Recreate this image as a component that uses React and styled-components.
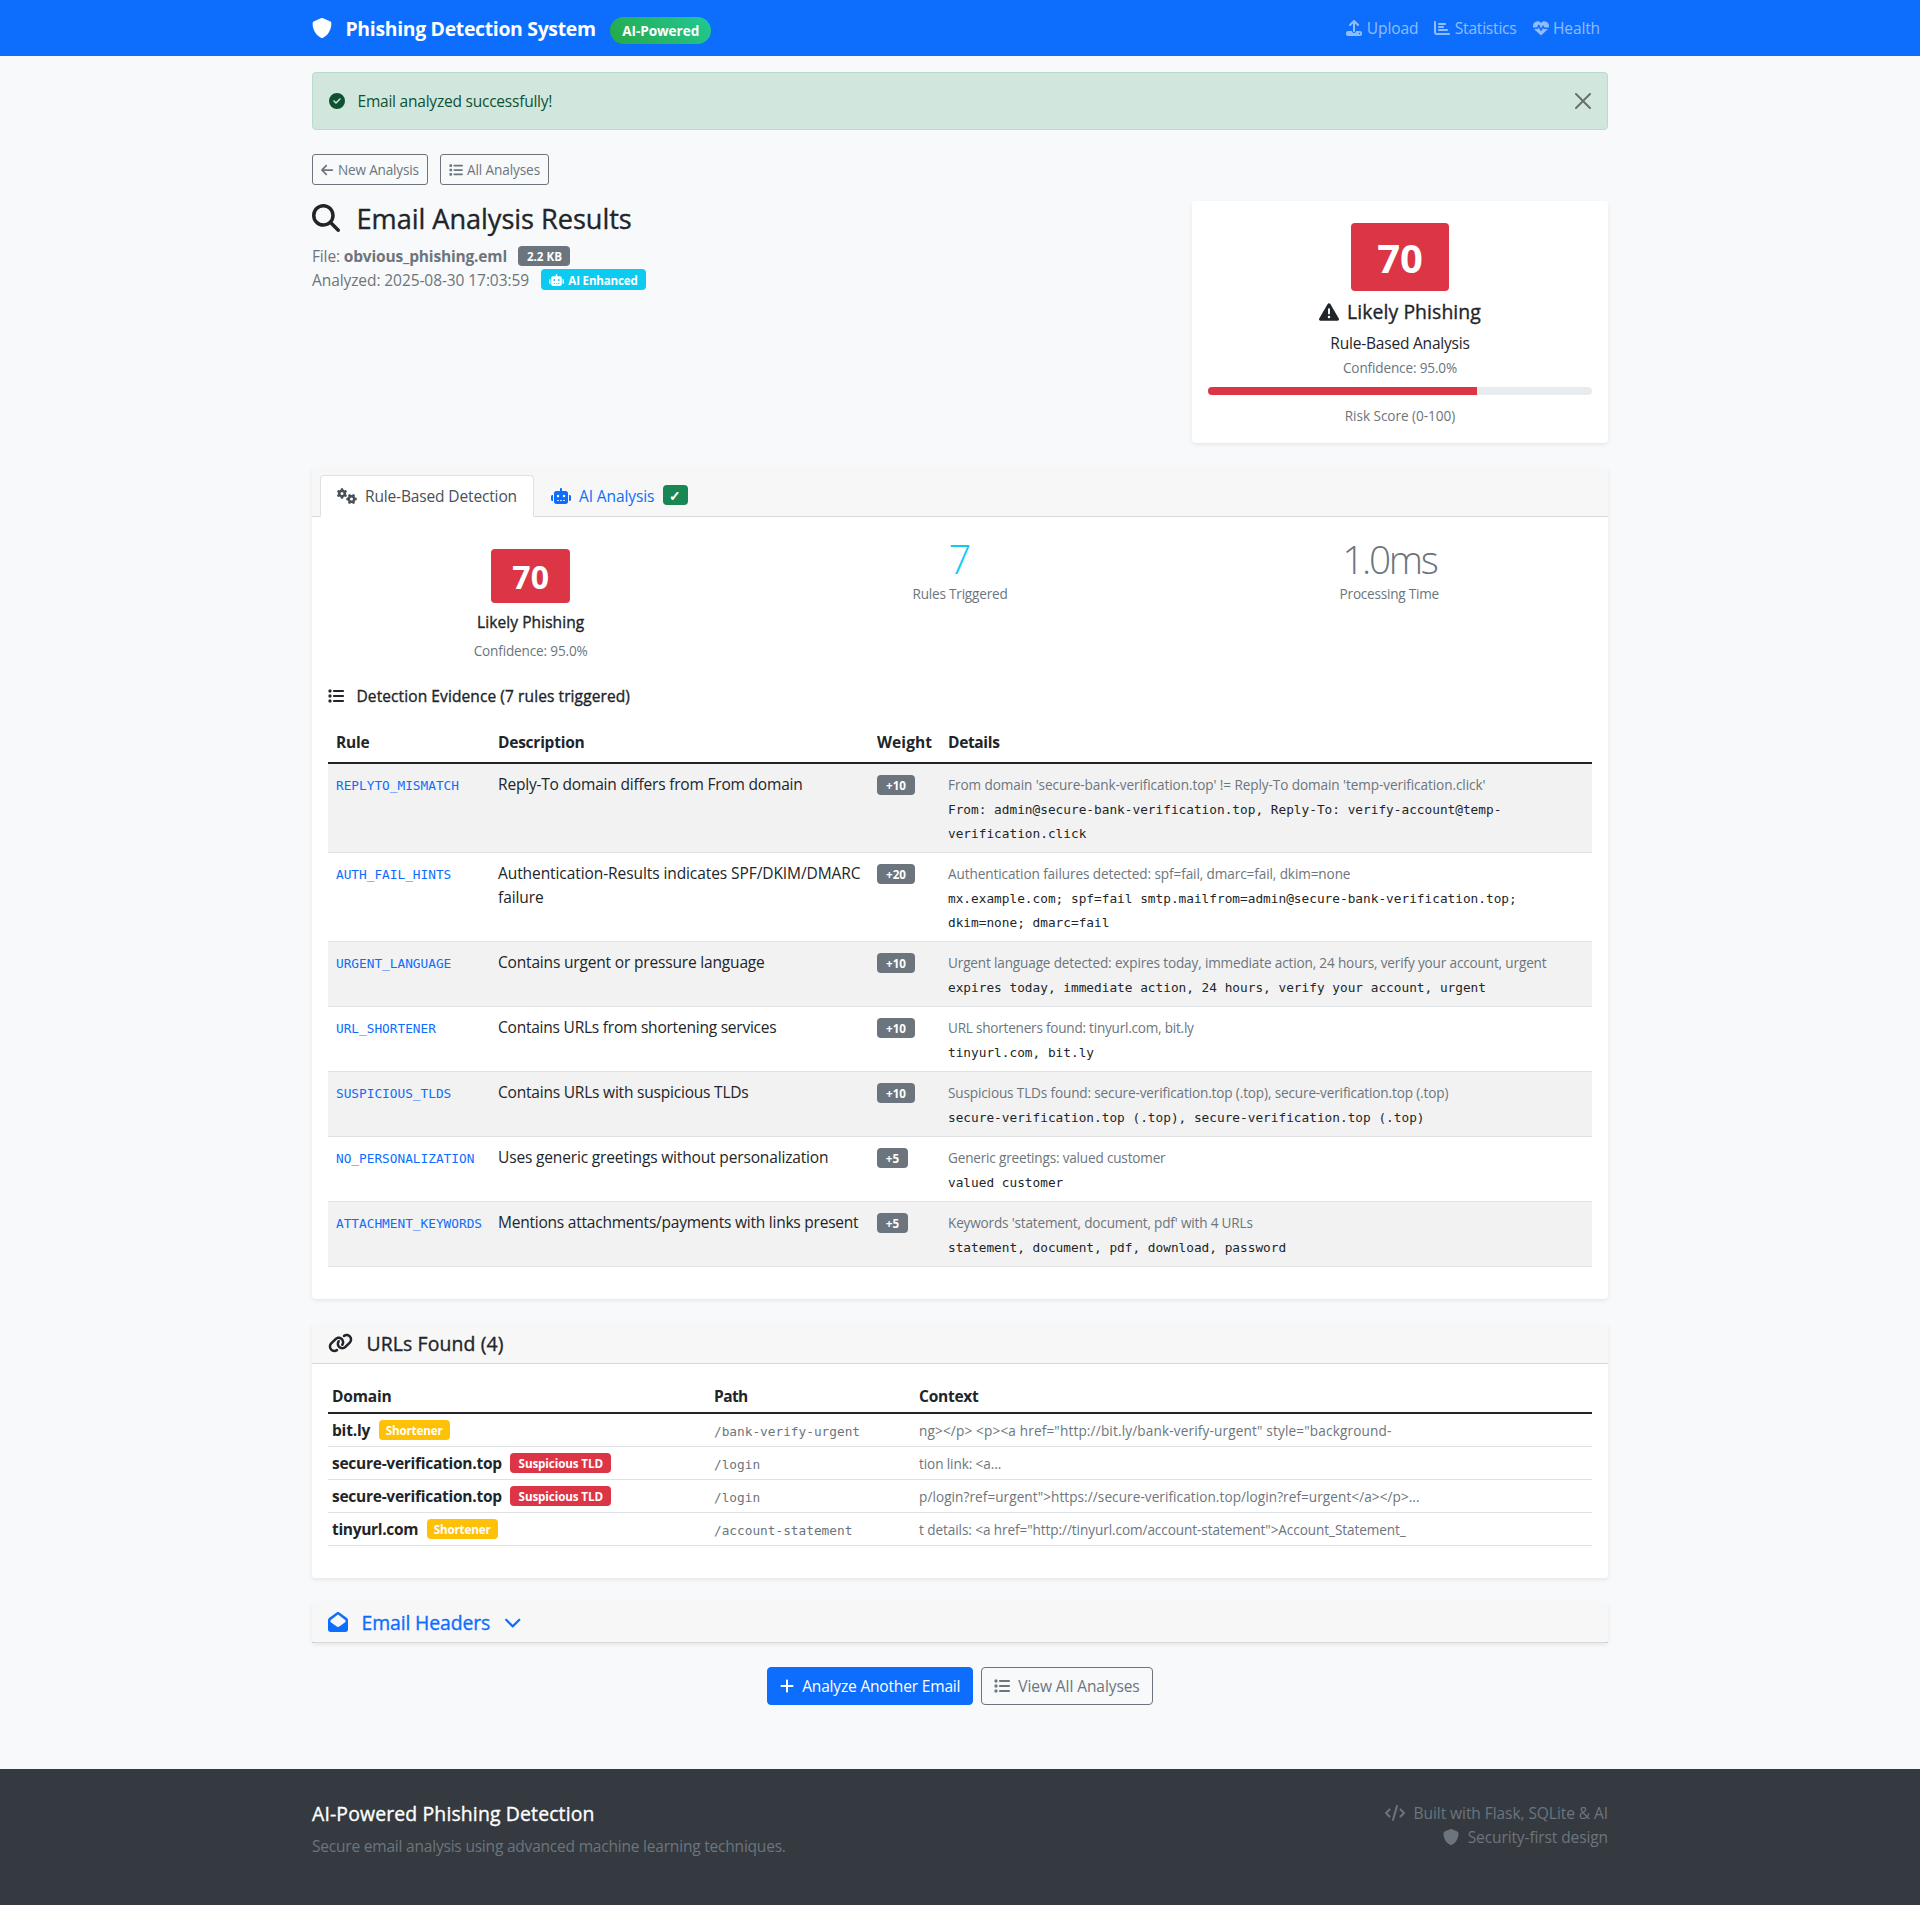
import React from "react";
import styled, { createGlobalStyle, css } from "styled-components";
import {
  FaShield, FaUpload, FaChartBar, FaHeartPulse, FaCircleCheck, FaArrowLeft, FaList,
  FaMagnifyingGlass, FaRobot, FaTriangleExclamation, FaGears, FaLink, FaEnvelopeOpen,
  FaChevronDown, FaPlus, FaCode,
} from "react-icons/fa6";

const c = {
  blue: "#0d6efd", gray: "#6c757d", ink: "#212529", red: "#dc3545",
  cyan: "#0dcaf0", green: "#198754", yellow: "#ffc107", line: "#dee2e6",
};

const GlobalStyle = createGlobalStyle`
  *, *::before, *::after { box-sizing: border-box; }
  body {
    margin: 0;
    background: #f8f9fa;
    color: ${c.ink};
    font: 400 16px/1.5 "Open Sans", "Noto Sans", sans-serif;
  }
  h2, h5, h6, p { margin: 0; }
`;

const T = styled.span`
  font-size: 0.97em;
  letter-spacing: ${(p) => p.$ls || 0}px;
  white-space: nowrap;
  ${(p) => p.$drop && "vertical-align: -1px;"}
`;
const Ico = styled.span`
  margin-left: ${(p) => p.$ml || 0}px;
  margin-right: ${(p) => p.$mr ?? 12}px;
  svg {
    width: ${(p) => p.$w || 1}em;
    height: 1em;
    vertical-align: -0.125em;
  }
`;
const Container = styled.div`
  width: 1320px;
  margin: 0 auto;
  padding: 0 12px;
`;
const NavBar = styled.nav`
  height: 56px;
  background: ${c.blue};
`;
const NavInner = styled(Container)`
  display: flex;
  align-items: center;
  justify-content: space-between;
  height: 100%;
`;
const Brand = styled.div`
  display: flex;
  align-items: center;
  color: #fff;
  font-size: 20px;
  font-weight: 700;
  svg { display: block; }
`;
const BrandName = styled(T)`
  margin-top: 2px;
`;
const AiPill = styled.span`
  width: 101px;
  margin: 5px 0 0 14.5px;
  padding: 6px 0;
  border-radius: 14px;
  background: linear-gradient(45deg, #28a745, #20c997);
  font-size: 14px;
  line-height: 15px;
  text-align: center;
`;
const NavLinks = styled.div`
  display: flex;
  gap: 16px;
  padding-right: 8px;
  color: rgba(255, 255, 255, 0.55);
`;
const Alert = styled.div`
  display: flex;
  align-items: center;
  justify-content: space-between;
  height: 58px;
  margin: 16px 0 24px;
  padding: 0 16px;
  border: 1px solid #badbcc;
  border-radius: 4px;
  background: #d1e7dd;
  color: #0f5132;
`;
const Close = styled.svg`
  width: 16px;
  height: 16px;
  fill: #000;
  opacity: 0.5;
`;
const ButtonRow = styled.div`
  display: flex;
  gap: ${(p) => p.$gap}px;
  justify-content: ${(p) => p.$justify || "flex-start"};
`;
const Button = styled.button`
  height: ${(p) => (p.$small ? 31 : 38)}px;
  width: ${(p) => p.$w}px;
  padding: 0;
  font-family: inherit;
  font-size: ${(p) => (p.$small ? 14 : 16)}px;
  line-height: 1.5;
  border: 1px solid ${(p) => (p.$primary ? c.blue : c.gray)};
  border-radius: ${(p) => (p.$small ? 3 : 4)}px;
  background: ${(p) => (p.$primary ? c.blue : "transparent")};
  color: ${(p) => (p.$primary ? "#fff" : c.gray)};
`;
const Summary = styled.div`
  display: flex;
  justify-content: space-between;
  align-items: flex-start;
  margin: 16px 0 24px;
`;
const medium = css`
  font-weight: 500;
  -webkit-text-stroke: 0.35px currentColor;
  svg { stroke: none; }
`;
const Title = styled.h2`
  ${medium}
  margin-bottom: 8px;
  font-size: 28px;
  line-height: 33.6px;
`;
const Meta = styled.div`
  color: ${c.gray};
  height: 24px;
`;
const Badge = styled.span`
  display: inline-block;
  width: ${(p) => p.$w}px;
  margin-left: ${(p) => p.$ml || 0}px;
  padding: 5px 0 3.4px;
  border-radius: 4px;
  background: ${(p) => p.$bg || c.gray};
  color: #fff;
  font-size: ${(p) => p.$size || 12}px;
  font-weight: 700;
  line-height: 12px;
  text-align: center;
  vertical-align: ${(p) => p.$lift ?? 0}px;
  white-space: nowrap;
`;
const cardBase = css`
  background: #fff;
  border-radius: 4px;
  box-shadow: 0 2px 4px rgba(0, 0, 0, 0.075);
`;
const ScoreCard = styled.div`
  ${cardBase}
  width: 416px;
  height: 242px;
  padding: 22px 16px 0;
  display: flex;
  flex-direction: column;
  align-items: center;
`;
const Score = styled.div`
  width: ${(p) => (p.$big ? 98 : 79)}px;
  height: ${(p) => (p.$big ? 68 : 54)}px;
  border-radius: 4px;
  background: ${c.red};
  color: #fff;
  font-size: ${(p) => (p.$big ? 40 : 32)}px;
  font-weight: 700;
  line-height: ${(p) => (p.$big ? 70 : 56)}px;
  text-align: center;
`;
const Heading5 = styled.h5`
  ${medium}
  font-size: 20px;
  line-height: 24px;
`;
const Verdict = styled(Heading5)`
  margin: 9px 0 7px;
`;
const Small = styled.div`
  height: 24px;
  color: ${c.gray};
  font-size: 14px;
  line-height: 26px;
`;
const Track = styled.div`
  width: 100%;
  height: 8px;
  margin: 8px 0;
  border-radius: 4px;
  background: #e9ecef;
  overflow: hidden;
`;
const Fill = styled.div`
  width: 70%;
  height: 100%;
  background: ${c.red};
`;
const Card = styled.section`
  ${cardBase}
  margin-bottom: 24px;
`;
const CardHeader = styled.div`
  height: 41px;
  padding: 8px 16px;
  border-bottom: 1px solid rgba(0, 0, 0, 0.125);
  border-radius: 4px 4px 0 0;
  background: rgba(0, 0, 0, 0.03);
  color: ${(p) => p.$color || c.ink};
`;
const TabHeader = styled(CardHeader)`
  display: flex;
  height: 50px;
  padding: 8px 8px 0;
`;
const Tab = styled.div`
  height: 42px;
  padding: 8px 16px;
  border: 1px solid transparent;
  border-radius: 4px 4px 0 0;
  color: ${c.blue};
  white-space: nowrap;
  ${(p) => p.$active && css`
    width: 214px;
    background: #fff;
    border-color: ${c.line} ${c.line} #fff;
    color: #495057;
  `}
`;
const CardBody = styled.div`
  padding: 16px 16px 32px;
`;
const Stats = styled.div`
  display: grid;
  grid-template-columns: repeat(3, 1fr);
  height: 154px;
  margin: 0 -12px;
`;
const Stat = styled.div`
  display: flex;
  flex-direction: column;
  align-items: center;
  padding-top: ${(p) => p.$pt || 0}px;
`;
const Big = styled.div`
  height: 48px;
  color: ${(p) => p.$color};
  font-size: 40px;
  font-weight: 300;
  line-height: 51px;
`;
const Heading6 = styled.h6`
  ${medium}
  margin: ${(p) => p.$margin};
  font-size: 16px;
  line-height: 19px;
`;
const Table = styled.table`
  width: 100%;
  table-layout: fixed;
  border-collapse: separate;
  border-spacing: 0;
`;
const Th = styled.th`
  width: ${(p) => p.$w}px;
  height: ${(p) => p.$h}px;
  padding: 0 ${(p) => p.$px}px;
  border-bottom: 2px solid ${c.ink};
  text-align: left;
  font-weight: 700;
`;
const Row = styled.tr`
  background: ${(p) => (p.$striped ? "#f2f2f2" : "transparent")};
`;
const Td = styled.td`
  padding: ${(p) => (p.$sm ? "4px" : "8px")};
  border-bottom: 1px solid ${c.line};
  vertical-align: top;
  line-height: 24px;
`;
const Code = styled.div`
  height: 24px;
  color: ${(p) => p.$color || c.ink};
  font: 12.77px/28px "DejaVu Sans Mono", monospace;
  white-space: nowrap;
`;
const Footer = styled.footer`
  height: 136px;
  margin-top: 64px;
  padding-top: 32px;
  background: #343a40;
  color: ${c.gray};
`;
const FooterInner = styled(Container)`
  display: flex;
  justify-content: space-between;
`;
const FooterTitle = styled(Heading5)`
  margin-bottom: 8px;
  color: #fff;
`;
const FooterRight = styled.div`
  text-align: right;
`;

const rules = [
  ["REPLYTO_MISMATCH", ["Reply-To domain differs from From domain"], -0.2, "+10", "From domain 'secure-bank-verification.top' != Reply-To domain 'temp-verification.click'", -0.084, ["From: admin@secure-bank-verification.top, Reply-To: verify-account@temp-", "verification.click"]],
  ["AUTH_FAIL_HINTS", ["Authentication-Results indicates SPF/DKIM/DMARC", "failure"], -0.09, "+20", "Authentication failures detected: spf=fail, dmarc=fail, dkim=none", -0.1, ["mx.example.com; spf=fail smtp.mailfrom=admin@secure-bank-verification.top;", "dkim=none; dmarc=fail"]],
  ["URGENT_LANGUAGE", ["Contains urgent or pressure language"], -0.18, "+10", "Urgent language detected: expires today, immediate action, 24 hours, verify your account, urgent", -0.157, ["expires today, immediate action, 24 hours, verify your account, urgent"]],
  ["URL_SHORTENER", ["Contains URLs from shortening services"], -0.23, "+10", "URL shorteners found: tinyurl.com, bit.ly", -0.23, ["tinyurl.com, bit.ly"]],
  ["SUSPICIOUS_TLDS", ["Contains URLs with suspicious TLDs"], -0.21, "+10", "Suspicious TLDs found: secure-verification.top (.top), secure-verification.top (.top)", -0.145, ["secure-verification.top (.top), secure-verification.top (.top)"]],
  ["NO_PERSONALIZATION", ["Uses generic greetings without personalization"], -0.16, "+5", "Generic greetings: valued customer", -0.185, ["valued customer"]],
  ["ATTACHMENT_KEYWORDS", ["Mentions attachments/payments with links present"], -0.23, "+5", "Keywords 'statement, document, pdf' with 4 URLs", -0.18, ["statement, document, pdf, download, password"]],
];

const urls = [
  ["bit.ly", -0.2, "Shortener", "/bank-verify-urgent", 'ng></p> <p><a href="http://bit.ly/bank-verify-urgent" style="background-', 0.16],
  ["secure-verification.top", -0.27, "Suspicious TLD", "/login", "tion link: <a...", -0.1],
  ["secure-verification.top", -0.27, "Suspicious TLD", "/login", 'p/login?ref=urgent">https://secure-verification.top/login?ref=urgent</a></p>...', 0.07],
  ["tinyurl.com", -0.33, "Shortener", "/account-statement", 't details: <a href="http://tinyurl.com/account-statement">Account_Statement_', -0.08],
];

const tags = {
  Shortener: { width: 71, color: c.yellow, ls: -0.15 },
  "Suspicious TLD": { width: 101, color: c.red, ls: -0.1 },
};

export default function App() {
  return (
    <>
      <GlobalStyle />
      <NavBar>
        <NavInner>
          <Brand>
            <Ico $mr={13.5}><FaShield /></Ico>
            <BrandName $ls={-0.31}>Phishing Detection System</BrandName>
            <AiPill><T $ls={-0.05}>AI-Powered</T></AiPill>
          </Brand>
          <NavLinks>
            <span><Ico $mr={4.5}><FaUpload /></Ico><T $ls={-0.13}>Upload</T></span>
            <span><Ico $mr={4.5}><FaChartBar /></Ico><T $ls={-0.2}>Statistics</T></span>
            <span><Ico $mr={4.5}><FaHeartPulse /></Ico><T $ls={-0.13}>Health</T></span>
          </NavLinks>
        </NavInner>
      </NavBar>
      <Container>
        <Alert>
          <span><Ico $mr={12.5}><FaCircleCheck /></Ico><T $ls={-0.23}>Email analyzed successfully!</T></span>
          <Close viewBox="0 0 16 16">
            <path d="M.293.293a1 1 0 011.414 0L8 6.586 14.293.293a1 1 0 111.414 1.414L9.414 8l6.293 6.293a1 1 0 01-1.414 1.414L8 9.414l-6.293 6.293a1 1 0 01-1.414-1.414L6.586 8 .293 1.707a1 1 0 010-1.414z" />
          </Close>
        </Alert>
        <ButtonRow $gap={12}>
          <Button $small $w={116}><Ico $mr={4.5} $w={0.875}><FaArrowLeft /></Ico><T $ls={-0.2}>New Analysis</T></Button>
          <Button $small $w={109}><Ico $mr={4}><FaList /></Ico><T $ls={-0.1}>All Analyses</T></Button>
        </ButtonRow>
        <Summary>
          <div>
            <Title><Ico $mr={16.5}><FaMagnifyingGlass /></Ico><T $drop $ls={-0.05}>Email Analysis Results</T></Title>
            <Meta><T $ls={-0.15}>File: </T><b><T $ls={-0.18}>obvious_phishing.eml</T></b><Badge $lift={1} $w={52} $ml={11.5}><T>2.2 KB</T></Badge></Meta>
            <Meta><T $ls={-0.09}>Analyzed: 2025-08-30 17:03:59</T><Badge $lift={1} $w={105} $ml={12} $bg={c.cyan}><Ico $mr={4} $w={1.25}><FaRobot /></Ico><T $ls={-0.2}>AI Enhanced</T></Badge></Meta>
          </div>
          <ScoreCard>
            <Score $big>70</Score>
            <Verdict><Ico $mr={8}><FaTriangleExclamation /></Ico><T $ls={0.08}>Likely Phishing</T></Verdict>
            <div><T $ls={-0.21}>Rule-Based Analysis</T></div>
            <Small><T $ls={-0.15}>Confidence: 95.0%</T></Small>
            <Track><Fill /></Track>
            <Small><T $ls={-0.04}>Risk Score (0-100)</T></Small>
          </ScoreCard>
        </Summary>
        <Card>
          <TabHeader>
            <Tab $active><Ico $mr={8} $w={1.25}><FaGears /></Ico><T $ls={-0.15}>Rule-Based Detection</T></Tab>
            <Tab><Ico $mr={8} $w={1.25}><FaRobot /></Ico><T $ls={-0.1}>AI Analysis</T><Badge $lift={1} $size={14} $w={25} $ml={8.5} $bg={c.green}>✓</Badge></Tab>
          </TabHeader>
          <CardBody>
            <Stats>
              <Stat $pt={16}>
                <Score>70</Score>
                <Heading6 $margin="9.5px 0 6.5px"><T $ls={0.07}>Likely Phishing</T></Heading6>
                <Small><T $ls={-0.15}>Confidence: 95.0%</T></Small>
              </Stat>
              <Stat><Big $color={c.cyan}>7</Big><Small><T $ls={-0.2}>Rules Triggered</T></Small></Stat>
              <Stat><Big $color={c.gray}><T $ls={-2.3}>1.0ms</T></Big><Small><T $ls={-0.22}>Processing Time</T></Small></Stat>
            </Stats>
            <Heading6 $margin="0 0 16px"><Ico $mr={12.5}><FaList /></Ico><T $ls={0.09}>Detection Evidence (7 rules triggered)</T></Heading6>
            <Table>
              <thead>
                <tr>
                  <Th $w={162} $h={42} $px={8}><T $ls={-0.2}>Rule</T></Th>
                  <Th $w={379} $h={42} $px={8}><T $ls={-0.25}>Description</T></Th>
                  <Th $w={71} $h={42} $px={8}><T $ls={0.1}>Weight</T></Th>
                  <Th $h={42} $px={8}><T $ls={-0.35}>Details</T></Th>
                </tr>
              </thead>
              <tbody>
                {rules.map(([id, desc, descLs, weight, note, noteLs, code], i) => (
                  <Row key={id} $striped={i % 2 === 0}>
                    <Td><Code $color={c.blue}>{id}</Code></Td>
                    <Td>{desc.map((d) => <div key={d}><T $ls={descLs}>{d}</T></div>)}</Td>
                    <Td><Badge $w={weight === "+5" ? 31 : 38}><T>{weight}</T></Badge></Td>
                    <Td>
                      <Small><T $ls={noteLs}>{note}</T></Small>
                      {code.map((l) => <Code key={l}>{l}</Code>)}
                    </Td>
                  </Row>
                ))}
              </tbody>
            </Table>
          </CardBody>
        </Card>
        <Card>
          <CardHeader><Heading5><Ico $mr={13.5} $w={1.25}><FaLink /></Ico><T $drop $ls={0.12}>URLs Found (4)</T></Heading5></CardHeader>
          <CardBody>
            <Table>
              <thead>
                <tr>
                  <Th $w={382} $h={34} $px={4}><T $ls={-0.2}>Domain</T></Th>
                  <Th $w={205} $h={34} $px={4}><T $ls={-0.6}>Path</T></Th>
                  <Th $h={34} $px={4}><T $ls={-0.25}>Context</T></Th>
                </tr>
              </thead>
              <tbody>
                {urls.map(([domain, domainLs, tag, path, ctx, ctxLs], i) => (
                  <Row key={i}>
                    <Td $sm><b><T $ls={domainLs}>{domain}</T></b><Badge $lift={1} $ml={8.5} $w={tags[tag].width} $bg={tags[tag].color}><T $ls={tags[tag].ls}>{tag}</T></Badge></Td>
                    <Td $sm><Code $color={c.gray}>{path}</Code></Td>
                    <Td $sm><Small><T $ls={ctxLs}>{ctx}</T></Small></Td>
                  </Row>
                ))}
              </tbody>
            </Table>
          </CardBody>
        </Card>
        <Card>
          <CardHeader $color={c.blue}><Heading5><Ico $mr={13.5}><FaEnvelopeOpen /></Ico><T $drop $ls={-0.12}>Email Headers</T><Ico $ml={13.5} $mr={0} $w={0.875}><FaChevronDown /></Ico></Heading5></CardHeader>
        </Card>
        <ButtonRow $gap={8} $justify="center">
          <Button $primary $w={206}><Ico $mr={8.5} $w={0.875}><FaPlus /></Ico><T $ls={-0.18}>Analyze Another Email</T></Button>
          <Button $w={172}><Ico $mr={8}><FaList /></Ico><T $ls={-0.08}>View All Analyses</T></Button>
        </ButtonRow>
      </Container>
      <Footer>
        <FooterInner>
          <div>
            <FooterTitle><T $drop $ls={0.15}>AI-Powered Phishing Detection</T></FooterTitle>
            <p><T $ls={-0.21}>Secure email analysis using advanced machine learning techniques.</T></p>
          </div>
          <FooterRight>
            <div><Ico $mr={8.5} $w={1.25}><FaCode /></Ico><T $ls={-0.07}>Built with Flask, SQLite & AI</T></div>
            <div><Ico $mr={8.5}><FaShield /></Ico><T $ls={-0.11}>Security-first design</T></div>
          </FooterRight>
        </FooterInner>
      </Footer>
    </>
  );
}
